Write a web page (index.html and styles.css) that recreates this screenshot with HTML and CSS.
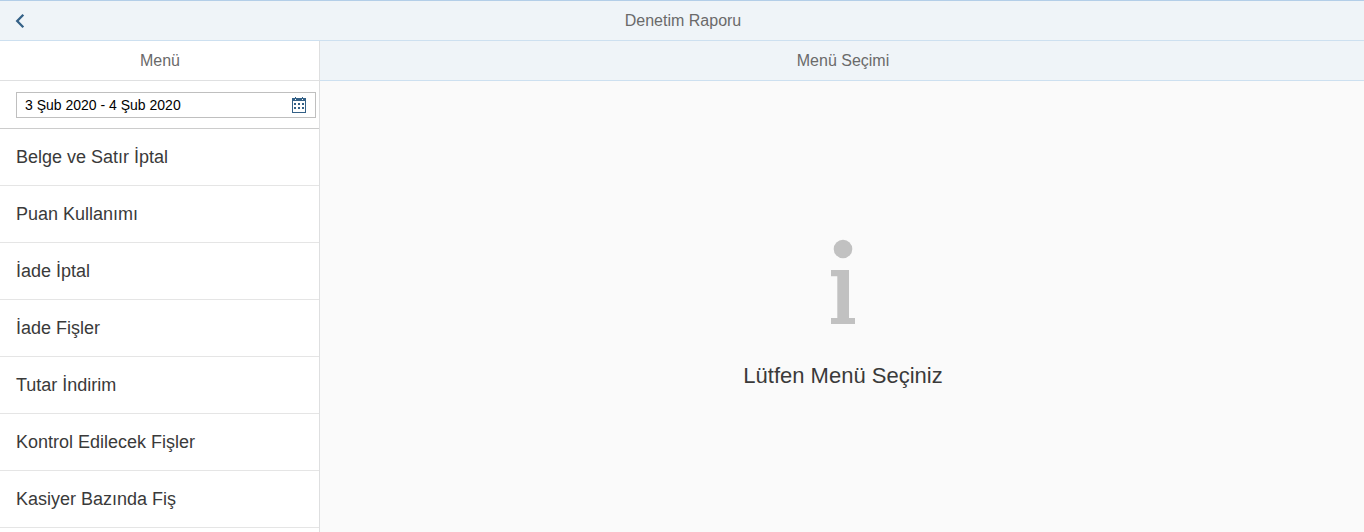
FILE: index.html
```html
<!DOCTYPE html>
<html lang="tr">
<head>
<meta charset="utf-8">
<title>Denetim Raporu</title>
<link rel="stylesheet" href="styles.css">
</head>
<body>
<div class="app">
  <header class="shell-bar">
    <button class="back" aria-label="Geri">
      <svg width="10" height="16" viewBox="0 0 10 16"><path d="M8.300 1.700 2.200 8l6.100 6.300" fill="none" stroke="#346187" stroke-width="2.300"/></svg>
    </button>
    <h1 class="title">Denetim Raporu</h1>
    <span></span>
  </header>
  <div class="split">
    <aside class="master">
      <div class="bar"><h2 class="title">Menü</h2></div>
      <div class="filter">
        <div class="date-input">
          <span>3 Şub 2020 - 4 Şub 2020</span>
          <svg width="14" height="16" viewBox="0 0 14 16" fill="#346187">
            <path fill-rule="evenodd" d="M0 1h14v15H0zM1 4v11h12V4z"/>
            <path d="M3 0h1v1H3zM10 0h1v1h-1z"/>
            <path d="M3 2h1v1H3zM10 2h1v1h-1z" fill="#fff"/>
            <path d="M2 6h2v2H2zM6 6h2v2H6zM10 6h2v2h-2zM2 10h2v2H2zM6 10h2v2H6zM10 10h2v2h-2z"/>
          </svg>
        </div>
      </div>
      <ul class="menu">
        <li>Belge ve Satır İptal</li>
        <li>Puan Kullanımı</li>
        <li>İade İptal</li>
        <li>İade Fişler</li>
        <li>Tutar İndirim</li>
        <li>Kontrol Edilecek Fişler</li>
        <li>Kasiyer Bazında Fiş</li>
        <li></li>
      </ul>
    </aside>
    <main class="detail">
      <div class="bar bar-tinted"><h2 class="title">Menü Seçimi</h2></div>
      <div class="message">
        <svg width="26" height="86" viewBox="0 0 26 86" fill="#c1c1c1">
          <circle cx="13" cy="10" r="9.300"/>
          <path d="M1 31h18v48h6v6H1v-6h6.300V37.300H1z"/>
        </svg>
        <p>Lütfen Menü Seçiniz</p>
      </div>
    </main>
  </div>
</div>
</body>
</html>
```
FILE: styles.css
```css
* { box-sizing: border-box; }
body {
  margin: 0;
  font-family: "Liberation Sans", Arial, sans-serif;
  color: #3a3a3a;
  background: #fafafa;
}
.app { display: flex; flex-direction: column; height: 100vh; overflow: hidden; }
.shell-bar {
  display: grid;
  grid-template-columns: 48px 1fr 46px;
  align-items: center;
  height: 41px;
  flex: none;
  background: #eff4f8;
  border-top: 1px solid #b3cee8;
  border-bottom: 1px solid #cde0f0;
}
.back { display: flex; margin: 0 0 0 15px; padding: 0; border: 0; background: none; }
.title { margin: 0; font-size: 16px; font-weight: 400; line-height: 20px; color: #6a6a6a; text-align: center; }
.split { display: flex; flex: 1; min-height: 0; }
.master { width: 320px; flex: none; background: #fff; border-right: 1px solid #dedfe0; overflow: hidden; }
.bar { display: flex; align-items: center; justify-content: center; height: 40px; padding-left: 1px; border-bottom: 1px solid #dfe0e1; }
.bar-tinted { background: #eff4f8; border-bottom-color: #cde0f0; flex: none; padding-left: 2px; }
.filter { height: 48px; padding: 11px 3px 0 16px; border-bottom: 1px solid #ccc; }
.date-input {
  display: flex;
  align-items: center;
  justify-content: space-between;
  height: 26px;
  padding: 0 9px 0 8px;
  border: 1px solid #bfbfbf;
  background: #fff;
  font-size: 14px;
  color: #000;
}
.menu { list-style: none; margin: 0; padding: 0; }
.menu li { height: 57px; padding-left: 16px; border-bottom: 1px solid #e5e5e5; font-size: 18px; line-height: 56px; }
.detail { display: flex; flex-direction: column; flex: 1; min-width: 0; }
.message { display: flex; flex-direction: column; align-items: center; padding: 158px 0 0 2px; }
.message p { margin: 37px 0 0; font-size: 22px; line-height: 28px; }
```
